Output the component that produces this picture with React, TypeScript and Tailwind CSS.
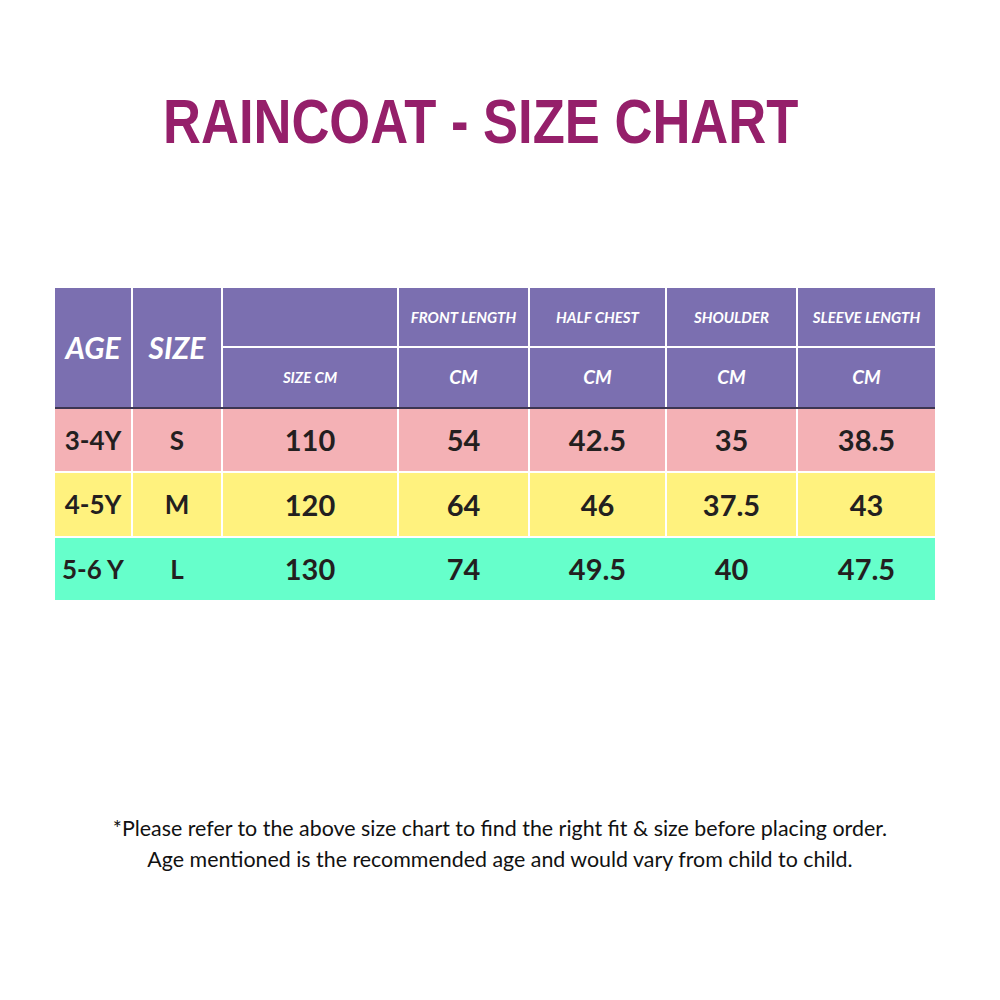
import React from "react";

const cols = "grid grid-cols-[76px_88px_174px_129px_135px_129px_137px] gap-x-[2px]";

const rows = [
  { bg: "bg-[#f4b1b5]", cells: ["3-4Y", "S", "110", "54", "42.5", "35", "38.5"], h: "h-[62px]" },
  { bg: "bg-[#fff27e]", cells: ["4-5Y", "M", "120", "64", "46", "37.5", "43"], h: "h-[63px]" },
  { bg: "bg-[#66ffcb]", cells: ["5-6 Y", "L", "130", "74", "49.5", "40", "47.5"], h: "h-[62px]" },
];

export default function App() {
  const purple = "bg-[#7b6fb0]";
  const hdrSmall = "text-white italic font-bold text-[15px] flex items-center justify-center";
  const hdrCm = "text-white italic font-bold text-[19px] flex items-center justify-center";
  return (
    <div className="w-[1000px] h-[1000px] bg-white flex flex-col" style={{ fontFamily: "Lato, 'Open Sans', sans-serif" }}>
      <div className="h-[90px]" />
      <div className="flex justify-start pl-[163px]">
        <h1
          className="text-[63px] leading-none font-bold text-[#951f6a] whitespace-nowrap origin-left scale-x-[0.834]"
          style={{ fontFamily: "'Liberation Sans', Arial, sans-serif" }}
        >
          RAINCOAT - SIZE CHART
        </h1>
      </div>
      <div className="h-[135px]" />
      <div className="ml-[55px] w-[880px] flex flex-col">
        <div className="border-b-2 border-[#3c3552] bg-white">
          <div className={`${cols} gap-y-[2px] grid-rows-[58px_59px]`}>
            <div className={`${purple} row-span-2 flex items-center justify-center text-white italic font-bold text-[30px]`}>AGE</div>
            <div className={`${purple} row-span-2 flex items-center justify-center text-white italic font-bold text-[30px]`}>SIZE</div>
            <div className={purple} />
            <div className={`${purple} ${hdrSmall}`}>FRONT LENGTH</div>
            <div className={`${purple} ${hdrSmall}`}>HALF CHEST</div>
            <div className={`${purple} ${hdrSmall}`}>SHOULDER</div>
            <div className={`${purple} ${hdrSmall}`}>SLEEVE LENGTH</div>
            <div className={`${purple} ${hdrSmall}`}>SIZE CM</div>
            <div className={`${purple} ${hdrCm}`}>CM</div>
            <div className={`${purple} ${hdrCm}`}>CM</div>
            <div className={`${purple} ${hdrCm}`}>CM</div>
            <div className={`${purple} ${hdrCm}`}>CM</div>
          </div>
        </div>
        {rows.map((r, i) => (
          <div key={i} className={i > 0 ? "mt-[2px]" : ""}>
            <div className={`${cols} ${i === 2 ? r.bg : ""}`}>
              {r.cells.map((c, j) => (
                <div
                  key={j}
                  className={`${r.bg} ${r.h} flex items-center justify-center font-bold text-[#231f20] ${j < 2 ? "text-[26px]" : "text-[29px]"}`}
                >
                  {c}
                </div>
              ))}
            </div>
          </div>
        ))}
      </div>
      <div className="h-[213px]" />
      <div className="flex flex-col items-center text-[#111] text-[21.4px] leading-[31px] whitespace-nowrap">
        <p>*Please refer to the above size chart to find the right fit &amp; size before placing order.</p>
        <p>Age mentioned is the recommended age and would vary from child to child.</p>
      </div>
    </div>
  );
}
